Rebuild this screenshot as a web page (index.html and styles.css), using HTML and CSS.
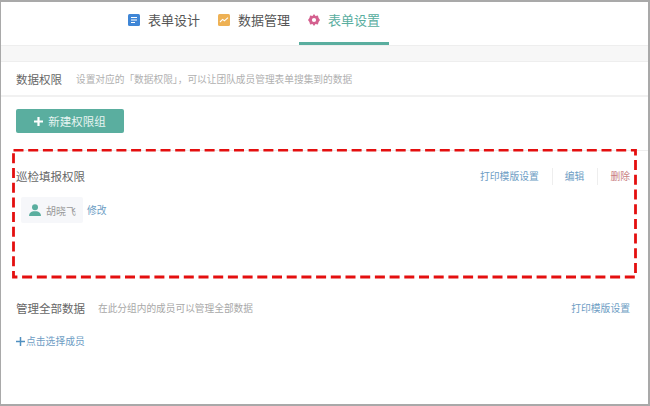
FILE: index.html
```html
<!DOCTYPE html>
<html lang="zh">
<head>
<meta charset="utf-8">
<title>表单设置</title>
<link rel="stylesheet" href="styles.css">
</head>
<body>
<div class="frame">
  <nav class="tabs">
    <a class="tab">
      <svg class="tab-icon" viewBox="0 0 12 12"><rect width="12" height="12" rx="1.5" fill="#3f86d6"/><path d="M3 3.5h6M3 6h6M3 8.5h4" stroke="#fff" stroke-width="1.2"/></svg>
      表单设计
    </a>
    <a class="tab">
      <svg class="tab-icon" viewBox="0 0 12 12"><rect width="12" height="12" rx="1.5" fill="#eeb154"/><path d="M2 8l2.6-2.6 1.8 1.4L10 3.6" stroke="#fff" stroke-width="1.1" fill="none"/></svg>
      数据管理
    </a>
    <a class="tab tab-active">
      <svg class="tab-icon" viewBox="0 0 12 12"><path fill="#d4608f" fill-rule="evenodd" d="M6 0l1.5 1.9 2.4-.3.7 2.3L12 6l-1.4 2.1-.7 2.3-2.4-.3L6 12l-1.5-1.9-2.4.3-.7-2.3L0 6l1.4-2.1.7-2.3 2.4.3zM6 3.9a2.1 2.1 0 1 0 0 4.2 2.1 2.1 0 0 0 0-4.2z"/></svg>
      表单设置
    </a>
  </nav>
  <div class="band"></div>
  <header class="section-head">
    <span class="title">数据权限</span>
    <span class="desc">设置对应的「数据权限」，可以让团队成员管理表单搜集到的数据</span>
  </header>
  <div class="actions">
    <button class="btn-new"><svg class="btn-plus" viewBox="0 0 9 9"><path d="M4.5 0v9M0 4.5h9" stroke="#fff" stroke-width="2.2"/></svg>新建权限组</button>
  </div>
  <section class="group">
    <div class="group-row">
      <span class="title">巡检填报权限</span>
      <div class="links">
        <a class="link">打印模版设置</a>
        <a class="link link-sep">编辑</a>
        <a class="link link-sep link-danger">删除</a>
      </div>
    </div>
    <div class="members">
      <span class="chip">
        <svg class="chip-icon" viewBox="0 0 12 12"><circle cx="6" cy="3.2" r="3" fill="#5aae9f"/><path d="M0 12c0-3 2-4.4 4.2-4.8h3.6C10 7.6 12 9 12 12z" fill="#5aae9f"/></svg>
        胡晓飞
      </span>
      <a class="link">修改</a>
    </div>
  </section>
  <section class="group-all">
    <div class="group-row">
      <div class="all-left">
        <span class="title">管理全部数据</span>
        <span class="desc all-desc">在此分组内的成员可以管理全部数据</span>
      </div>
      <a class="link">打印模版设置</a>
    </div>
    <a class="link add-member"><svg class="add-icon" viewBox="0 0 9 9"><path d="M4.5 0v9M0 4.5h9" stroke="#4f8fc0" stroke-width="1.5"/></svg>点击选择成员</a>
  </section>
  <svg class="highlight" viewBox="0 0 626 130" width="626" height="130"><rect x="1.5" y="1" width="622" height="127" fill="none" stroke="#e40f0f" stroke-width="2.8" stroke-dasharray="10 4.7"/></svg>
</div>
</body>
</html>
```
FILE: styles.css
```css
* { box-sizing: border-box; }
html, body { margin: 0; padding: 0; background: #fff; }
body { font-family: "Liberation Sans", "Noto Sans CJK SC", sans-serif; }
.frame {
  position: relative;
  width: 650px;
  height: 406px;
  border: solid #a9a9a9;
  border-width: 2px 2px 2px 1px;
  overflow: hidden;
  background: #fff;
}
.tabs {
  display: flex;
  height: 43px;
  padding-left: 118px;
}
.tab {
  display: flex;
  align-items: center;
  gap: 8px;
  height: 43px;
  padding: 0 9px 5px;
  font-size: 13px;
  color: #555;
  border-bottom: 3px solid transparent;
}
.tab-active { color: #5aae9f; border-bottom-color: #5aae9f; }
.tab-icon { width: 12px; height: 12px; flex: none; }
.band {
  height: 17px;
  background: #f7f7f7;
  border-top: 1px solid #eee;
  border-bottom: 1px solid #eee;
}
.section-head {
  display: flex;
  align-items: center;
  height: 35px;
  padding-left: 15px;
  gap: 14px;
  border-bottom: 2px solid #f1f1f1;
}
.title { font-size: 11.5px; color: #666; }
.desc { font-size: 9.7px; color: #b0b0b0; }
.actions { padding: 12px 0 0 15px; }
.btn-new {
  display: flex;
  align-items: center;
  justify-content: center;
  gap: 5px;
  width: 108px;
  height: 24px;
  padding: 0;
  border: 0;
  border-radius: 2px;
  background: #5aae9f;
  color: #e6f4f1;
  font: inherit;
  font-size: 11.5px;
}
.btn-plus { width: 9px; height: 9px; flex: none; }
.group {
  margin: 17px 0 0 15px;
  height: 127px;
  border-top: 1px solid #eee;
}
.group-row {
  display: flex;
  align-items: center;
  justify-content: space-between;
  padding-right: 18px;
}
.group > .group-row { height: 50px; }
.links { display: flex; align-items: center; }
.link { font-size: 9.8px; color: #6d9dc4; }
.link-sep {
  margin-left: 13px;
  padding-left: 12px;
  line-height: 17px;
  border-left: 1px solid #eee;
}
.link-danger { color: #c98282; }
.members { display: flex; align-items: center; padding-left: 5px; gap: 4px; margin-top: -4px; }
.chip {
  display: flex;
  align-items: center;
  gap: 5px;
  width: 62px;
  height: 26px;
  padding-left: 8px;
  border-radius: 2px;
  background: #f6f7fa;
  font-size: 10px;
  color: #999;
}
.chip-icon { width: 12px; height: 12px; flex: none; }
.group-all { padding: 23px 0 0 15px; }
.all-left { display: flex; align-items: center; gap: 13px; }
.all-desc { color: #a8a8a8; }
.group-all > .group-row { height: 16px; }
.add-member { display: flex; align-items: center; gap: 1px; margin-top: 17px; height: 16px; }
.add-icon { width: 9px; height: 9px; flex: none; }
.highlight { position: absolute; left: 11px; top: 147px; }
```
